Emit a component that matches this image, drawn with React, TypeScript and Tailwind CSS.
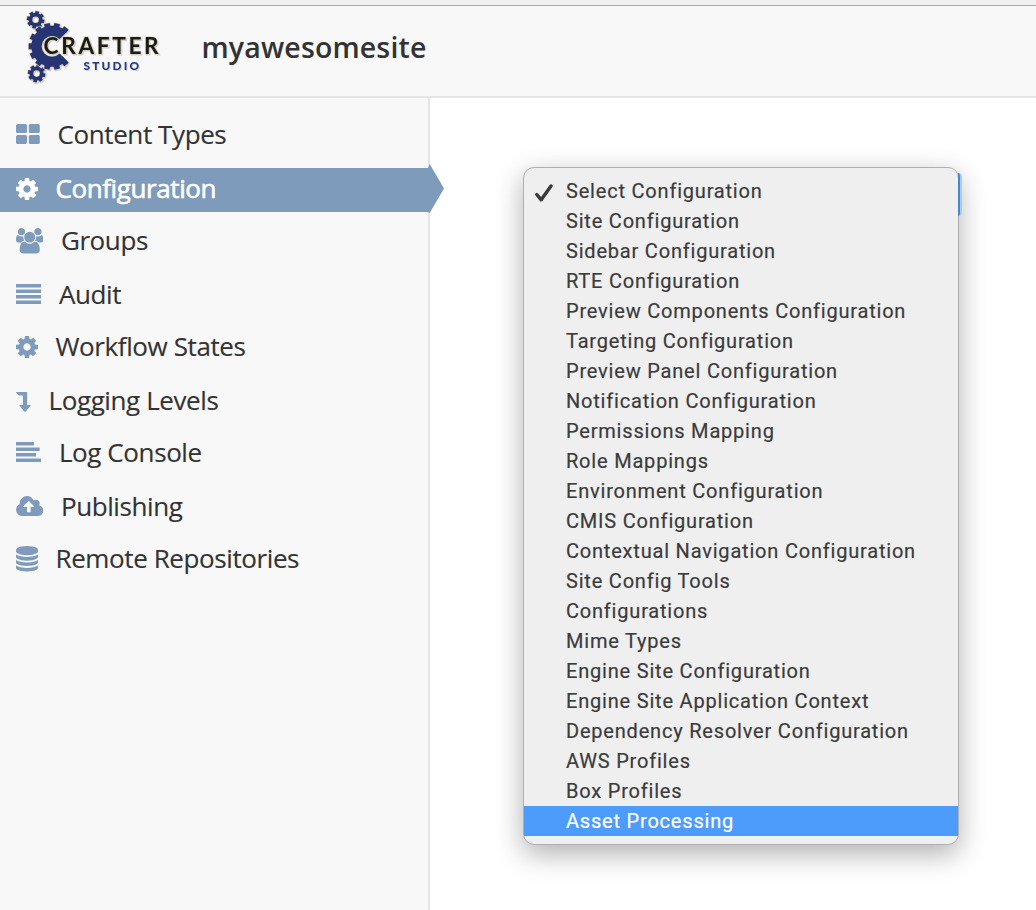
const options = ["Select Configuration","Site Configuration","Sidebar Configuration","RTE Configuration","Preview Components Configuration","Targeting Configuration","Preview Panel Configuration","Notification Configuration","Permissions Mapping","Role Mappings","Environment Configuration","CMIS Configuration","Contextual Navigation Configuration","Site Config Tools","Configurations","Mime Types","Engine Site Configuration","Engine Site Application Context","Dependency Resolver Configuration","AWS Profiles","Box Profiles","Asset Processing"];

function gear(cx: number, cy: number, ro: number, ri: number, n: number, rot: number) {
  const pts: string[] = [];
  const step = (Math.PI * 2) / n;
  for (let i = 0; i < n; i++) {
    const a = rot + i * step;
    for (const [r, d] of [[ri, -0.32], [ro, -0.27], [ro, 0.27], [ri, 0.32]]) {
      pts.push(`${(cx + r * Math.cos(a + d * step)).toFixed(2)} ${(cy + r * Math.sin(a + d * step)).toFixed(2)}`);
    }
  }
  return "M" + pts.join("L") + "Z";
}

function hole(cx: number, cy: number, r: number) {
  return `M${cx - r} ${cy}a${r} ${r} 0 1 0 ${2 * r} 0a${r} ${r} 0 1 0 ${-2 * r} 0Z`;
}

function Logo() {
  return (
    <svg className="h-[91px] w-[180px] shrink-0 [filter:drop-shadow(1.5px_1.5px_0.6px_#00000028)]" viewBox="0 6 180 91">
      <g fill="#263474" stroke="#d9cfb4" strokeWidth="1.2" paintOrder="stroke" fillRule="evenodd">
        <path d={gear(35.6, 19.8, 8.9, 7, 8, 0.2) + hole(35.6, 19.8, 3.3)} />
        <path d={gear(36.6, 73.6, 8.9, 7, 8, 0.2) + hole(36.6, 73.6, 3.3)} />
        <clipPath id="open"><path d="M20 15H58L69 30L52 46.3L69 62.6L58 78H20Z" /></clipPath>
        <path clipPath="url(#open)" d={gear(52, 46.3, 23.5, 20.6, 14, Math.PI) + hole(52, 46.3, 10.4)} />
      </g>
      <g className="[font-family:Lato,sans-serif]" paintOrder="stroke" stroke="#d9cfb4" strokeWidth="1.2">
        <text x="43.6" y="53.8" fontSize="22.6" fontWeight="700" fill="#1b1b18" textLength="115" lengthAdjust="spacing">CRAFTER</text>
        <text x="83.5" y="70.3" fontSize="11.8" fontWeight="900" fill="#263c86" strokeWidth="0" textLength="55.5" lengthAdjust="spacing">STUDIO</text>
      </g>
    </svg>
  );
}

const COG = "M1024 640q0-106-75-181t-181-75-181 75-75 181 75 181 181 75 181-75 75-181zm512-109v222q0 12-8 23t-20 13l-185 28q-19 54-39 91 35 50 107 138 10 12 10 25t-9 23q-27 37-99 108t-94 71q-12 0-26-9l-138-108q-44 23-91 38-16 136-29 186-7 28-36 28h-222q-14 0-24.5-8.5t-11.5-21.5l-28-184q-49-16-90-37l-141 107q-10 9-25 9-14 0-25-11-126-114-165-168-7-10-7-23 0-12 8-23 15-21 51-66.5t54-70.5q-27-50-41-99l-183-27q-13-2-21-12.5t-8-23.5v-222q0-12 8-23t19-13l186-28q14-46 39-92-40-57-107-138-10-12-10-24 0-10 9-23 26-36 98.5-107.5t94.5-71.5q13 0 26 10l138 107q44-23 91-38 16-136 29-186 7-28 36-28h222q14 0 24.5 8.5t11.5 21.5l28 184q49 16 90 37l142-107q9-9 24-9 13 0 25 10 129 119 165 170 7 8 7 22 0 12-8 23-15 21-51 66.5t-54 70.5q26 50 41 98l183 28q13 2 21 12.5t8 23.5z";
const USERS = "M593 640q-162 5-265 128h-134q-82 0-138-40.5t-56-118.5q0-353 124-353 6 0 43.5 21t97.5 42.5 119 21.5q67 0 133-23-5 37-5 66 0 139 81 256zm1071 637q0 120-73 189.5t-194 69.5h-874q-121 0-194-69.5t-73-189.5q0-53 3.5-103.5t14-109 26.5-108.5 43-97.5 62-81 85.5-53.5 111.5-20q10 0 43 21.5t73 48 107 48 135 21.5 135-21.5 107-48 73-48 43-21.5q61 0 111.5 20t85.5 53.5 62 81 43 97.5 26.5 108.5 14 109 3.5 103.5zm-1024-1277q0 106-75 181t-181 75-181-75-75-181 75-181 181-75 181 75 75 181zm704 384q0 159-112.5 271.5t-271.5 112.5-271.5-112.5-112.5-271.5 112.5-271.5 271.5-112.5 271.5 112.5 112.5 271.5zm576 225q0 78-56 118.5t-138 40.5h-134q-103-123-265-128 81-117 81-256 0-29-5-66 66 23 133 23 59 0 119-21.5t97.5-42.5 43.5-21q124 0 124 353zm-128-609q0 106-75 181t-181 75-181-75-75-181 75-181 181-75 181 75 75 181z";
const CLOUD = "M1280 736q0-14-9-23l-352-352q-9-9-23-9t-23 9l-351 351q-10 12-10 24 0 14 9 23t23 9h224v352q0 13 9.5 22.5t22.5 9.5h192q13 0 22.5-9.5t9.5-22.5v-352h224q13 0 22.5-9.5t9.5-22.5zm640 288q0 159-112.5 271.5t-271.5 112.5h-1088q-185 0-316.5-131.5t-131.5-316.5q0-130 70-240t188-165q-2-30-2-43 0-212 150-362t362-150q156 0 285.5 87t188.5 231q71-62 166-62 106 0 181 75t75 181q0 76-41 138 130 31 213.5 135.5t83.5 238.5z";
const DATABASE = "M768 768q237 0 443-43t325-127v170q0 69-103 128t-280 93.5-385 34.5-385-34.5-280-93.5-103-128v-170q119 84 325 127t443 43zm0 768q237 0 443-43t325-127v170q0 69-103 128t-280 93.5-385 34.5-385-34.5-280-93.5-103-128v-170q119 84 325 127t443 43zm0-384q237 0 443-43t325-127v170q0 69-103 128t-280 93.5-385 34.5-385-34.5-280-93.5-103-128v-170q119 84 325 127t443 43zm0-1152q208 0 385 34.5t280 93.5 103 128v128q0 69-103 128t-280 93.5-385 34.5-385-34.5-280-93.5-103-128v-128q0-69 103-128t280-93.5 385-34.5z";

const items = [
  { label: "Content Types", box: "", icon: "h-5 w-6 -mt-0.5", view: "0 0 24 20", d: "M1.5 0H9.5Q11 0 11 1.5V7.5Q11 9 9.5 9H1.5Q0 9 0 7.5V1.5Q0 0 1.5 0ZM14.3 0H22.3Q23.8 0 23.8 1.5V7.5Q23.8 9 22.3 9H14.3Q12.8 9 12.8 7.5V1.5Q12.8 0 14.3 0ZM1.5 11H9.5Q11 11 11 12.5V18.5Q11 20 9.5 20H1.5Q0 20 0 18.5V12.5Q0 11 1.5 11ZM14.3 11H22.3Q23.8 11 23.8 12.5V18.5Q23.8 20 22.3 20H14.3Q12.8 20 12.8 18.5V12.5Q12.8 11 14.3 11Z" },
  { label: "Configuration", box: "mt-[11px]", icon: "h-[22px] w-[22px] -mt-0.5", view: "0 -128 1536 1536", d: COG, active: true },
  { label: "Groups", box: "mt-[7px]", icon: "h-[25.6px] w-[27.4px]", view: "0 -256 1920 1792", d: USERS },
  { label: "Audit", box: "mt-[10px]", icon: "h-5 w-[25.4px] -mt-0.5", view: "0 0 25.4 20", d: "M0 0H25.4V3.5H0ZM0 5.5H25.4V9H0ZM0 11H25.4V14.5H0ZM0 16.5H25.4V20H0Z" },
  { label: "Workflow States", box: "mt-2", icon: "h-[22px] w-[22px]", view: "0 -128 1536 1536", d: COG },
  { label: "Logging Levels", box: "mt-[10px]", icon: "h-5 w-[15px] mt-0.5", view: "0 0 15 20", d: "M0 0H10.6Q11.2 0 11.2 .6V13H14Q14.9 13.2 14.4 14L9.6 19.6Q9 20.1 8.4 19.6L3.6 14Q3.1 13.2 4 13H6.9V3.5H3.2Q2.9 3.5 2.7 3.3L0 .4Z" },
  { label: "Log Console", box: "mt-2", icon: "h-5 w-[25.4px] -mt-0.5", view: "0 0 25.4 20", d: "M0 0H18V3.5H0ZM0 5.5H23.7V9H0ZM0 11H20V14.5H0ZM0 16.5H25.4V20H0Z" },
  { label: "Publishing", box: "mt-[10px]", icon: "h-5 w-[27.4px] -mt-0.5", view: "0 0 1920 1408", d: CLOUD },
  { label: "Remote Repositories", box: "mt-2", icon: "h-[25.6px] w-[22px]", view: "0 0 1536 1792", d: DATABASE },
];

export default function App() {
  return (
    <div className="flex h-[910px] w-[1036px] flex-col overflow-hidden bg-white [font-family:'Open_Sans',sans-serif]">
      <div className="h-1.5 shrink-0 border-b border-[#adadad] bg-[#f1f1f1]" />
      <header className="flex h-[92px] shrink-0 border-b-2 border-[#e5e5e5] bg-[#f8f8f8]">
        <Logo />
        <h1 className="ml-[21.5px] mt-[21px] text-[28.5px] font-semibold leading-10 tracking-[0.15px] text-[#333]">myawesomesite</h1>
      </header>
      <div className="flex min-h-0 flex-1">
        <nav className="w-[430px] shrink-0 border-r-2 border-[#e5e5e5] bg-[#f8f8f8] pt-[15px]">
          {items.map((it) => (
            <a key={it.label} className={`relative flex h-11 items-center pl-4 text-[26px] tracking-[-0.4px] ${it.box} ${it.active ? "bg-[#7e9bbb] text-white" : "text-[#333]"}`}>
              <svg className={`shrink-0 ${it.icon} ${it.active ? "fill-white" : "fill-[#7e9bbb]"}`} viewBox={it.view}><path d={it.d} /></svg>
              <span className={`ml-[17.5px] whitespace-nowrap leading-[44px] ${it.active ? "-mt-1 [-webkit-text-stroke:0.6px_white]" : "-mt-0.5 [-webkit-text-stroke:0.15px_#333]"}`}>{it.label}</span>
              {it.active && (
                <svg className="absolute -top-1 left-[427px] h-[49px] w-[17px] fill-[#7e9bbb]" viewBox="0 0 17 49"><path d="M0 4H1L2.7 0L17 24.5L2.7 49L1 48H0Z" /></svg>
              )}
            </a>
          ))}
        </nav>
        <main className="relative flex-1 pl-[93px] pt-[69px]">
          <ul className="relative h-[678px] w-[436px] rounded-[11px] border border-[#b0b0b0] bg-[#efefef] pt-[8px] text-[20px] tracking-[0.8px] text-[#3b3b3b] shadow-[0_9px_28px_#00000050] [-webkit-text-stroke:0.2px_currentColor] [font-family:Roboto,sans-serif]">
            {options.map((o, i) => (
              <li key={o} className={`flex h-[30px] items-center ${i === 21 ? "bg-[#4d9bfb] text-white" : ""}`}>
                <span className="flex w-[42px] shrink-0 pl-[11px] pt-[3px]">
                  {i === 0 && <svg className="h-[18px] w-[18px]" viewBox="0 0 18 18" fill="none" stroke="#3b3b3b" strokeWidth="3.4" strokeLinecap="round" strokeLinejoin="round"><path d="M1.8 10.5L6.2 15.8L16 2" /></svg>}
                </span>
                <span className="whitespace-nowrap">{o}</span>
              </li>
            ))}
          </ul>
          <div className="absolute left-[528px] top-[75px] h-[43px] w-[4px] rounded-r-[4px] border-r-2 border-[#a9cbf1] bg-[#4687cc]" />
        </main>
      </div>
    </div>
  );
}
